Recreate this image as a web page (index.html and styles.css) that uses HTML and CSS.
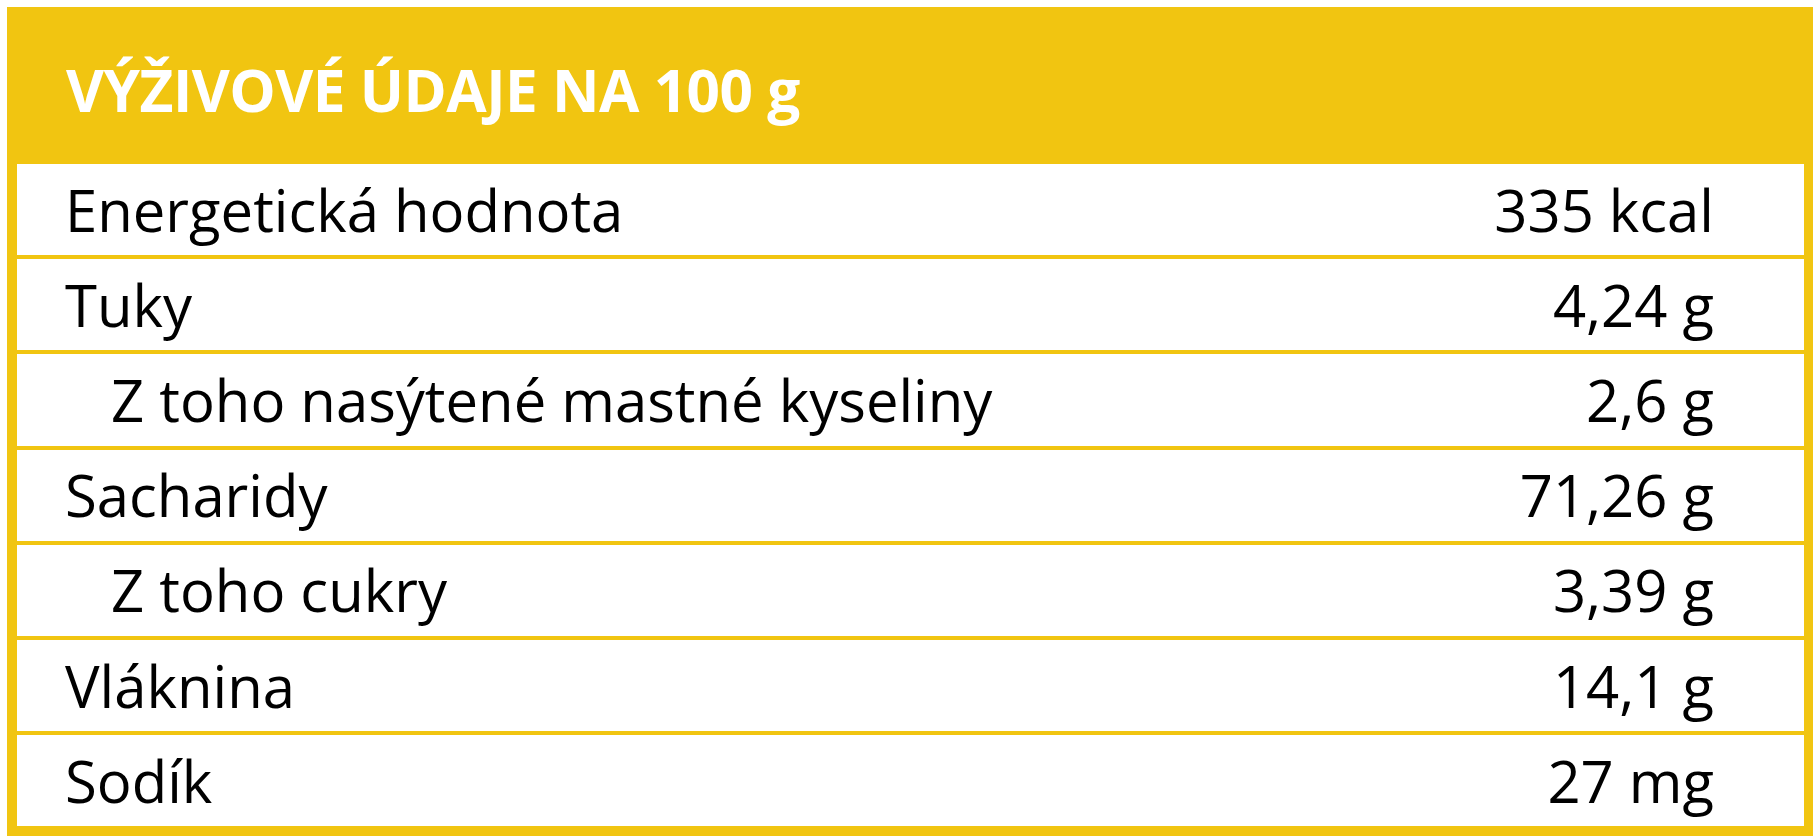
FILE: index.html
```html
<!DOCTYPE html>
<html lang="cs">
<head>
<meta charset="utf-8">
<title>Výživové údaje</title>
<link rel="stylesheet" href="styles.css">
</head>
<body>
<div class="card">
  <div class="card-head"><h1 class="title">VÝŽIVOVÉ ÚDAJE NA 100 g</h1></div>
  <div class="rows">
    <div class="row"><span class="label">Energetická hodnota</span><span class="value">335 kcal</span></div>
    <div class="row"><span class="label">Tuky</span><span class="value">4,24 g</span></div>
    <div class="row sub"><span class="label">Z toho nasýtené mastné kyseliny</span><span class="value">2,6 g</span></div>
    <div class="row"><span class="label">Sacharidy</span><span class="value">71,26 g</span></div>
    <div class="row sub"><span class="label">Z toho cukry</span><span class="value">3,39 g</span></div>
    <div class="row"><span class="label">Vláknina</span><span class="value">14,1 g</span></div>
    <div class="row"><span class="label">Sodík</span><span class="value">27 mg</span></div>
  </div>
</div>
</body>
</html>
```

FILE: styles.css
```css
html, body {
  margin: 0;
  padding: 0;
  background: #ffffff;
}
body {
  font-family: "Open Sans", "Noto Sans", sans-serif;
  color: #000;
}
.card {
  margin: 7px 6px 0 7px;
  width: 1806px;
  background: #f1c511;
  padding: 0 9px 10px 10px;
  box-sizing: border-box;
}
.card-head {
  height: 157px;
  display: flex;
  align-items: center;
  padding: 8px 0 0 49px;
  box-sizing: border-box;
}
.title {
  margin: 0;
  color: #ffffff;
  font-weight: 700;
  font-size: 58.5px;
  line-height: 1;
  letter-spacing: -0.5px;
}
.rows {
  display: flex;
  flex-direction: column;
  gap: 4px;
}
.row {
  background: #ffffff;
  height: 91.2px;
  display: flex;
  align-items: center;
  justify-content: space-between;
  padding: 0 90px 0 48px;
  font-size: 58px;
  line-height: 1;
}
.row.sub .label {
  padding-left: 46px;
}
```
